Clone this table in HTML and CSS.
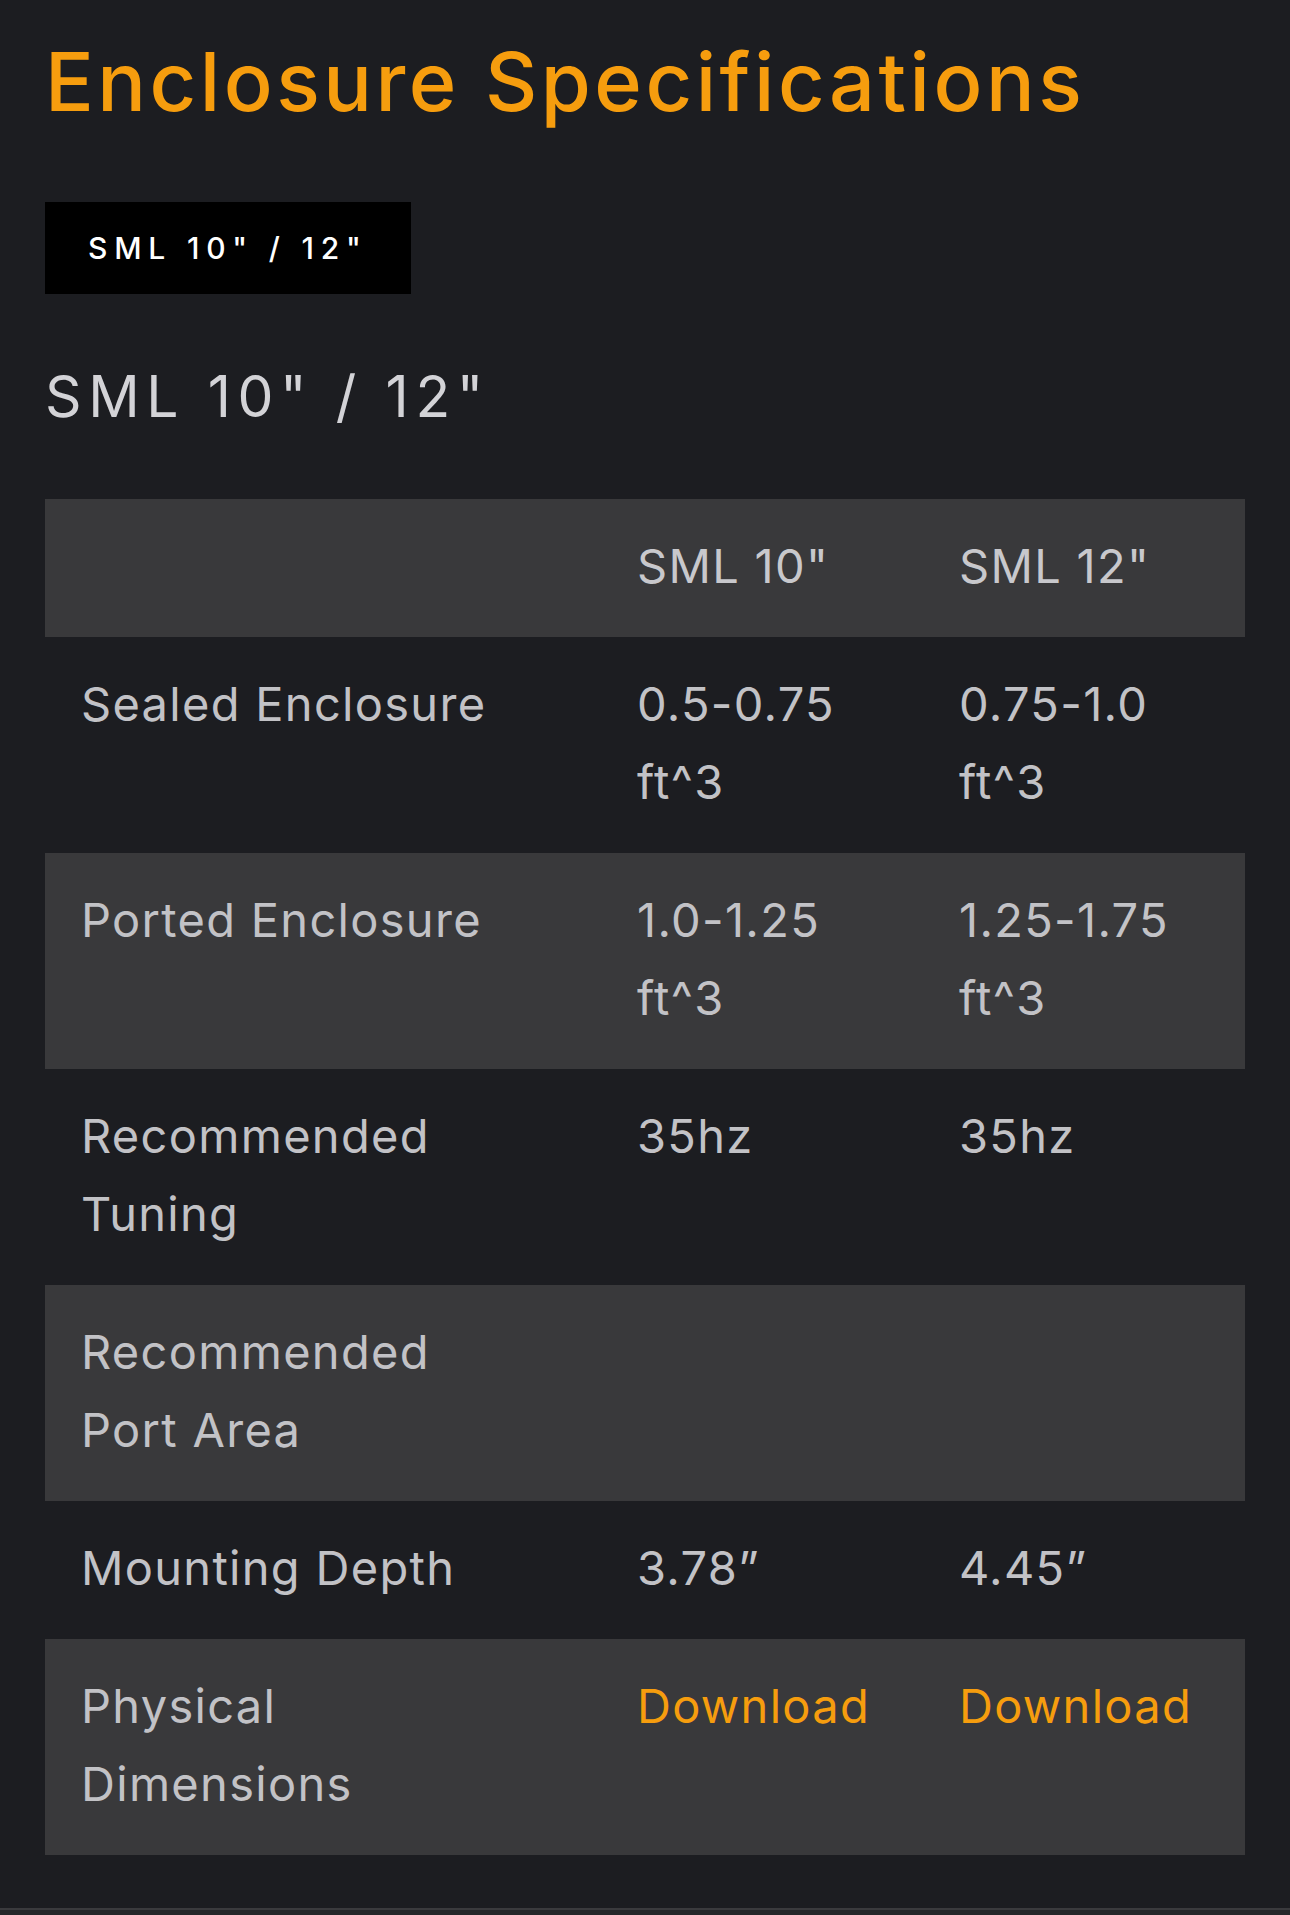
FILE: index.html
```html
<!DOCTYPE html>
<html>
<head>
<title>Enclosure Specifications</title>
<meta charset="utf-8">
<link rel="stylesheet" href="styles.css">
</head>
<body>
<div class="specs">
	<h1 class="specs-title">Enclosure Specifications</h1>
	<div class="specs-tabs">
		<a href="#" class="specs-tab">SML 10" / 12"</a>
	</div>
	<h3 class="specs-sub">SML 10" / 12"</h3>
	<table class="specs-table">
		<colgroup>
			<col class="col-label">
			<col class="col-val">
			<col class="col-val">
		</colgroup>
		<tr class="odd">
			<th></th>
			<th>SML 10"</th>
			<th>SML 12"</th>
		</tr>
		<tr>
			<td>Sealed Enclosure</td>
			<td>0.5-0.75 ft^3</td>
			<td>0.75-1.0 ft^3</td>
		</tr>
		<tr class="odd">
			<td>Ported Enclosure</td>
			<td>1.0-1.25 ft^3</td>
			<td>1.25-1.75 ft^3</td>
		</tr>
		<tr>
			<td>Recommended Tuning</td>
			<td>35hz</td>
			<td>35hz</td>
		</tr>
		<tr class="odd">
			<td>Recommended Port Area</td>
			<td></td>
			<td></td>
		</tr>
		<tr>
			<td>Mounting Depth</td>
			<td>3.78”</td>
			<td>4.45”</td>
		</tr>
		<tr class="odd">
			<td>Physical Dimensions</td>
			<td><a href="#">Download</a></td>
			<td><a href="#">Download</a></td>
		</tr>
	</table>
</div>
<div class="page-foot"></div>
</body>
</html>
```

FILE: styles.css
```css
body, h1, h3, table, td, th, div { margin: 0; padding: 0; }
body { background: #1c1d21; font-family: Inter, "Open Sans", sans-serif; color: #c2c2c6; }
a { text-decoration: none; }

.specs { padding: 34px 45px 53px; }
.specs-title { font-size: 81px; line-height: 97px; font-weight: 500; color: #f69d0e; letter-spacing: 3.5px; }
.specs-tabs { margin-top: 71px; }
.specs-tab { display: inline-block; height: 92px; line-height: 92px; padding: 0 43px; background: #000; color: #fff; font-size: 30px; font-weight: 500; letter-spacing: 6.8px; }
.specs-sub { margin-top: 68px; font-size: 57px; line-height: 70px; font-weight: 400; color: #d3d3d7; letter-spacing: 6.6px; }

.specs-table { margin-top: 67px; width: 1200px; border-collapse: collapse; table-layout: fixed; }
.col-label { width: 556px; }
.col-val { width: 322px; }
.specs-table th, .specs-table td { text-align: left; vertical-align: top; font-size: 47px; line-height: 78px; font-weight: 400; letter-spacing: 1.3px; padding: 28px 37px 32px 36px; }
.specs-table th:first-child, .specs-table td:first-child { padding-right: 70px; }
.specs-table th { color: #c8c8cc; }
.specs-table .odd { background: #39393b; }
.specs-table a { color: #f69d0e; }

.page-foot { border-top: 2px solid #3a3a3d; height: 10px; background: #252528; }
```
